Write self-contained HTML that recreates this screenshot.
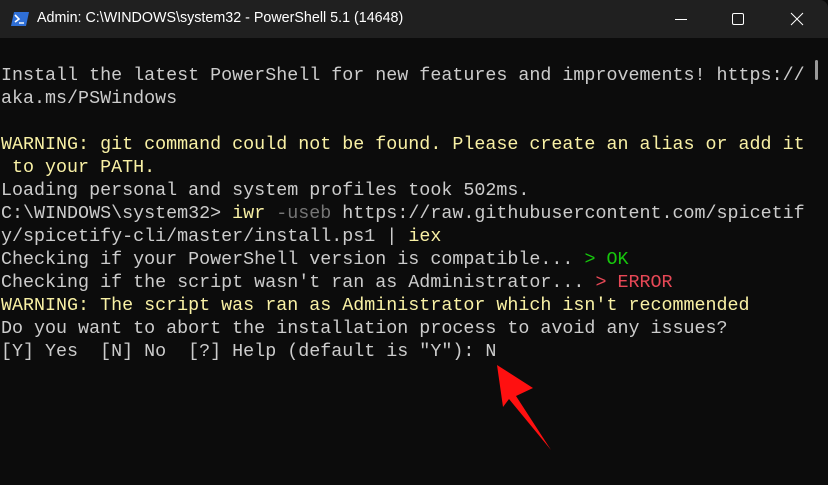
<!DOCTYPE html>
<html><head><meta charset="utf-8"><style>
html,body{margin:0;padding:0;width:828px;height:485px;overflow:hidden;background:#0c0c0c}
.title{position:absolute;left:0;top:0;width:828px;height:38px;background:#202020;border-top-right-radius:8px}
.ttext{position:absolute;left:37px;top:10px;font:14.3px "Liberation Sans",sans-serif;color:#fff}
.term{position:absolute;left:0;top:38px;width:828px;height:447px;background:#0c0c0c}
pre{position:absolute;left:1px;top:64px;margin:0;font:18.35px/23px "Liberation Mono",monospace;color:#cccccc}
.y{color:#f9f1a5}.g{color:#16c60c}.r{color:#e74856}.d{color:#767676}
.sb{position:absolute;left:815px;top:60px;width:3px;height:20px;background:#9a9a9a;border-radius:2px}
</style></head><body>
<div class="term"></div>
<div class="title">
<svg style="position:absolute;left:11px;top:12px" width="18" height="14" viewBox="0 0 18 14"><polygon points="3,0 18,0 15,14 0,14" fill="#2f6fd6"/><polyline points="4,3 8,7 4,10" fill="none" stroke="#fff" stroke-width="1.6"/><line x1="8" y1="11" x2="13" y2="11" stroke="#fff" stroke-width="1.4"/></svg>
<div class="ttext">Admin: C:\WINDOWS\system32 - PowerShell 5.1 (14648)</div>
<svg style="position:absolute;left:674px;top:12px" width="14" height="14"><line x1="1" y1="7.5" x2="13" y2="7.5" stroke="#fff" stroke-width="1"/></svg>
<svg style="position:absolute;left:731px;top:12px" width="14" height="14"><rect x="1.5" y="1.5" width="11" height="11" rx="1.5" fill="none" stroke="#fff" stroke-width="1"/></svg>
<svg style="position:absolute;left:790px;top:12px" width="14" height="14"><path d="M1 1L13 13M13 1L1 13" stroke="#fff" stroke-width="1"/></svg>
</div>
<div class="sb"></div>
<pre>Install the latest PowerShell for new features and improvements! https://
aka.ms/PSWindows

<span class="y">WARNING: git command could not be found. Please create an alias or add it
 to your PATH.</span>
Loading personal and system profiles took 502ms.
C:\WINDOWS\system32&gt; <span class="y">iwr</span> <span class="d">-useb</span> https://raw.githubusercontent.com/spicetif
y/spicetify-cli/master/install.ps1 | <span class="y">iex</span>
Checking if your PowerShell version is compatible... <span class="g">&gt; OK</span>
Checking if the script wasn't ran as Administrator... <span class="r">&gt; ERROR</span>
<span class="y">WARNING: The script was ran as Administrator which isn't recommended</span>
Do you want to abort the installation process to avoid any issues?
[Y] Yes  [N] No  [?] Help (default is "Y"): N</pre>
<svg style="position:absolute;left:0;top:0" width="828" height="485"><polygon points="497,365 533,388 516,396 551,450 509,399 503,407" fill="#ff1010"/></svg>
</body></html>
